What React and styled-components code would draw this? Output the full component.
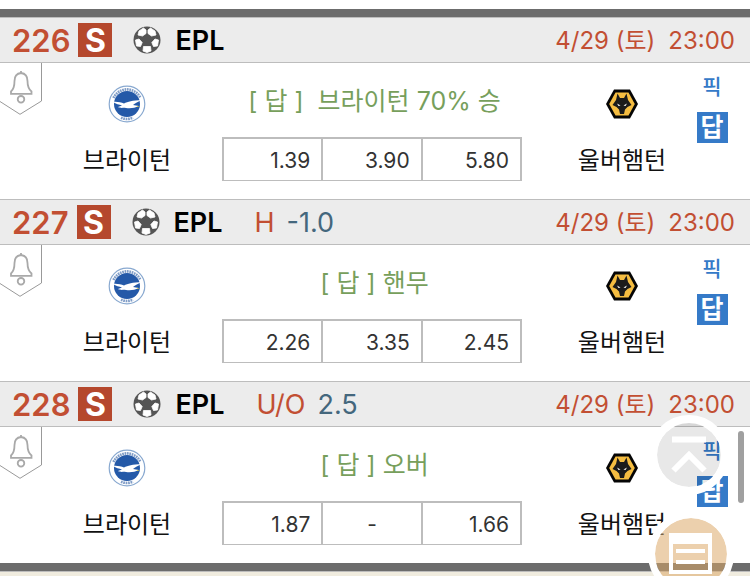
import React from 'react';
import styled, { createGlobalStyle } from 'styled-components';

const red = '#c24f33';
const line = '#bdbdbd';
const fontStack = `Inter, 'Noto Sans CJK KR', sans-serif`;

const GlobalStyle = createGlobalStyle`
  * {
    box-sizing: border-box;
  }

  body {
    margin: 0;
    background: #fff;
    font-family: ${fontStack};
  }

  button {
    padding: 0;
    border: 0;
    background: none;
    font-family: inherit;
    cursor: pointer;
  }
`;

const Page = styled.div`
  display: flex;
  flex-direction: column;
  min-height: 100vh;
  padding-top: 9px;
`;

const MatchList = styled.main`
  border-top: 8px solid #6c6c6c;
  border-bottom: 8px solid #6c6c6c;
`;

const Footer = styled.footer`
  flex: 1;
  border-top: 1px solid ${line};
  background: #f0ecdf;
`;

const MatchHeader = styled.header`
  display: flex;
  align-items: center;
  height: 46px;
  padding: 0 15px 0 12px;
  border-top: 1px solid ${line};
  border-bottom: 1px solid ${line};
  background: #ececec;
  line-height: 34px;
  white-space: nowrap;
`;

const HeaderText = styled.span`
  padding-top: 2px;
  font-size: 27px;
`;

const MatchNumber = styled(HeaderText)`
  color: ${red};
  font-size: 31px;
  font-weight: 600;
`;

const SingleBadge = styled.span`
  width: 34px;
  height: 34px;
  margin: 0 21px 0 8px;
  background: #b5482d;
  color: #fff;
  font-size: 32px;
  font-weight: 700;
  line-height: 36px;
  text-align: center;
`;

const League = styled(HeaderText)`
  margin-left: 14px;
  color: #000;
  font-weight: 600;
`;

const BetType = styled(HeaderText)`
  margin-left: 32px;
  color: ${red};
`;

const BetLine = styled(HeaderText)`
  margin-left: 12px;
  color: #44677d;
`;

const Kickoff = styled.time`
  display: flex;
  gap: 13px;
  margin-left: auto;
  padding-top: 2px;
  color: ${red};
  font-size: 24px;
`;

const MatchBody = styled.div`
  display: grid;
  grid-template-columns: 53px 1fr 347px 1fr 54px;
  height: 136px;
`;

const AlarmButton = styled.button`
  width: 42px;
  height: 52px;

  svg {
    display: block;
  }
`;

const Team = styled.div`
  display: flex;
  flex-direction: column;
  align-items: center;
  gap: 20px;
  padding-top: 22px;
  color: #111;
  font-size: 24px;
  line-height: 36px;
  white-space: nowrap;

  svg {
    display: block;
  }
`;

const Center = styled.div`
  display: flex;
  flex-direction: column;
  align-items: center;
  gap: 18px;
  padding-top: 20px;
`;

const Answer = styled.p`
  margin: 0;
  color: #779f5c;
  font-size: 25px;
  line-height: 36px;
  white-space: pre;
`;

const Odds = styled.table`
  width: 300px;
  height: 44px;
  margin-right: 5px;
  border-collapse: collapse;
  table-layout: fixed;
`;

const Odd = styled.td`
  padding: 2px ${({ $empty }) => ($empty ? '0' : '11px')} 0 0;
  border: 2px solid ${line};
  border-bottom-width: 1px;
  color: #333;
  font-size: 21px;
  text-align: ${({ $empty }) => ($empty ? 'center' : 'right')};
`;

const Picks = styled.div`
  display: flex;
  flex-direction: column;
  align-items: center;
  gap: 10px;
  width: 32px;
  padding-top: 8px;
`;

const PickButton = styled.button`
  color: #357ac8;
  font-size: 21px;
  font-weight: 500;
  line-height: 31px;
`;

const AnswerButton = styled(PickButton)`
  width: 31px;
  height: 31px;
  background: #357ac8;
  color: #fff;
  font-size: 25px;
  font-weight: 700;
`;

const FloatingButton = styled.button`
  position: fixed;
  border-radius: 50%;

  svg {
    display: block;
  }
`;

const TopButton = styled(FloatingButton)`
  right: 21px;
  bottom: 81px;
`;

const ListButton = styled(FloatingButton)`
  right: 16px;
  bottom: -21px;
`;

const ScrollThumb = styled.div`
  position: fixed;
  right: 6px;
  top: 431px;
  width: 6px;
  height: 72px;
  border-radius: 3px;
  background: #a0a0a0;
`;

const BellIcon = () => (
  <svg width="42" height="52" viewBox="0 0 42 52" fill="none" stroke="#999">
    <path d="M41.5 0V38L20 51.3L0 38.5" />
    <path d="M21 8V10M21 10C16.500 10.500 14.500 13.500 14.500 18C14.500 23 14 26 11 28.500V30.800H31.500V28.500C28.500 26 27.500 23 27.500 18C27.500 13.500 25.500 10.500 21 10Z" strokeWidth="1.800" stroke="#a9a9a9" />
    <circle cx="21" cy="36.300" r="3.300" strokeWidth="1.800" stroke="#a9a9a9" />
  </svg>
);

const BallIcon = () => (
  <svg width="28" height="28" viewBox="0 0 28 28">
    <circle cx="14" cy="14" r="13.500" fill="#555" />
    <g fill="#fff" stroke="#fff" strokeWidth="0.800" strokeLinejoin="round">
      <path d="M6 5L10.500 2L13 4V7.500L9.500 10L5 9Z" />
      <path d="M22 5L17.500 2L15 4V7.500L18.500 10L23 9Z" />
      <path d="M2.500 14L6 13L9.200 16.500L7.500 20.500L3.500 20Z" />
      <path d="M25.500 14L22 13L18.800 16.500L20.500 20.500L24.500 20Z" />
      <path d="M10.500 20.500H17.500L18 25L14 26.500L10 25Z" />
    </g>
  </svg>
);

const BrightonCrest = () => (
  <svg width="38" height="38" viewBox="0 0 38 38">
    <circle cx="19" cy="19" r="17.800" fill="#fff" stroke="#89a9d0" strokeWidth="1.200" />
    <path d="M5.500 13A14.900 14.900 0 0 1 32.500 13" fill="none" stroke="#7f9cc6" strokeWidth="2.600" strokeDasharray="1.700 0.700" />
    <path d="M13 32.700A14.900 14.900 0 0 0 25 32.700" fill="none" stroke="#7f9cc6" strokeWidth="2.600" strokeDasharray="1.700 0.700" />
    <circle cx="19" cy="19" r="13" fill="#2459a8" />
    <path d="M5 17C9 16.500 13 17.500 16 18.500C20 16.500 24 15.500 34 15C30 17 27 18 25 20C27 20.500 29 20.500 30.500 21C27 23 23 23.500 18 23C15 22.500 12.500 23.500 10 22L14 20.500C11 19.500 8 19 5 17Z" fill="#fff" />
    <path d="M29 20.700L31.500 21.600L29 22Z" fill="#e8d44a" />
  </svg>
);

const WolvesCrest = () => (
  <svg width="34" height="38" viewBox="0 0 34 38">
    <path d="M9 4.500H25L33 19L25 33.500H9L1 19Z" fill="#050505" />
    <path d="M10.500 7.500H23.500L29.800 19L23.500 30.500H10.500L4.200 19Z" fill="#f5bd41" />
    <path d="M12.500 8.500L15 13H19L21.500 8.500L23 15L26.500 20L22.500 22L20 24.500L19 29H15L14 24.500L11.500 22L7.500 20L11 15Z" fill="#1b1b1b" />
    <path d="M12 18.500L15.500 20.500L13.500 21ZM22 18.500L18.500 20.500L20.500 21Z" fill="#fff" />
  </svg>
);

const TopIcon = () => (
  <svg width="80" height="80" viewBox="0 0 80 80" fill="none" stroke="#fff">
    <circle cx="40" cy="40" r="32" fill="#000" fillOpacity="0.090" stroke="none" />
    <circle cx="40" cy="40" r="36" strokeWidth="8" />
    <path d="M23 24.500H57M24.500 55.500L40 40L55.500 55.500" strokeWidth="6" />
  </svg>
);

const ListIcon = () => (
  <svg width="86" height="86" viewBox="0 0 86 86" fill="none" stroke="#fff">
    <circle cx="43" cy="43" r="36" fill="#dca867" fillOpacity="0.540" stroke="none" />
    <circle cx="43" cy="43" r="39.500" strokeWidth="7" />
    <path d="M21 22H64V63H21ZM25 33V59H60V33Z" fill="#fff" fillRule="evenodd" stroke="none" />
    <path d="M28 40H57M28 51H57" strokeWidth="4" />
  </svg>
);

const matches = [
  {
    number: 226,
    answer: '[ 답 ]  브라이턴 70% 승',
    odds: ['1.39', '3.90', '5.80'],
  },
  {
    number: 227,
    betType: 'H',
    betLine: '-1.0',
    answer: '[ 답 ] 핸무',
    odds: ['2.26', '3.35', '2.45'],
  },
  {
    number: 228,
    betType: 'U/O',
    betLine: '2.5',
    answer: '[ 답 ] 오버',
    odds: ['1.87', '-', '1.66'],
  },
];

const Match = ({ number, betType, betLine, answer, odds }) => (
  <article>
    <MatchHeader>
      <MatchNumber>{number}</MatchNumber>
      <SingleBadge>S</SingleBadge>
      <BallIcon />
      <League>EPL</League>
      {betType && <BetType>{betType}</BetType>}
      {betLine && <BetLine>{betLine}</BetLine>}
      <Kickoff>
        <span>4/29 (토)</span>
        <span>23:00</span>
      </Kickoff>
    </MatchHeader>
    <MatchBody>
      <AlarmButton type="button">
        <BellIcon />
      </AlarmButton>
      <Team>
        <BrightonCrest />
        <span>브라이턴</span>
      </Team>
      <Center>
        <Answer>{answer}</Answer>
        <Odds>
          <tbody>
            <tr>
              {odds.map((odd, i) => (
                <Odd key={i} $empty={odd === '-'}>{odd}</Odd>
              ))}
            </tr>
          </tbody>
        </Odds>
      </Center>
      <Team>
        <WolvesCrest />
        <span>울버햄턴</span>
      </Team>
      <Picks>
        <PickButton type="button">픽</PickButton>
        <AnswerButton type="button">답</AnswerButton>
      </Picks>
    </MatchBody>
  </article>
);

const App = () => (
  <>
    <GlobalStyle />
    <Page>
      <MatchList>
        {matches.map((match) => (
          <Match key={match.number} {...match} />
        ))}
      </MatchList>
      <Footer />
    </Page>
    <TopButton type="button">
      <TopIcon />
    </TopButton>
    <ListButton type="button">
      <ListIcon />
    </ListButton>
    <ScrollThumb />
  </>
);

export default App;
